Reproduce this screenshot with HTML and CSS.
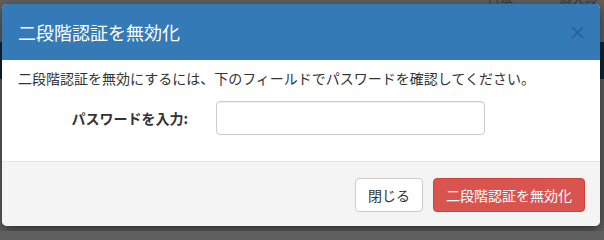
FILE: index.html
```html
<!DOCTYPE html>
<html lang="ja">
<head>
<meta charset="utf-8">
<title>二段階認証を無効化</title>
<link rel="stylesheet" href="styles.css">
</head>
<body>
<div class="page">
  <div class="page-nav">
    <span class="nav-item">日本語</span>
    <span class="nav-item">個人設定</span>
  </div>
  <div class="nav-band"></div>
</div>
<div class="modal">
  <div class="modal-header">
    <h4 class="modal-title">二段階認証を無効化</h4>
    <span class="close" aria-label="閉じる">
      <svg width="13" height="13" viewBox="0 0 13 13"><path d="M1 1 L12 12 M12 1 L1 12" stroke="#2b6597" stroke-width="2" fill="none"/></svg>
    </span>
  </div>
  <div class="modal-body">
    <p class="intro">二段階認証を無効にするには、下のフィールドでパスワードを確認してください。</p>
    <div class="form-row">
      <label class="form-label" for="pw">パスワードを入力:</label>
      <input class="form-input" id="pw" type="password">
    </div>
  </div>
  <div class="modal-footer">
    <button class="btn btn-default">閉じる</button>
    <button class="btn btn-danger">二段階認証を無効化</button>
  </div>
</div>
</body>
</html>
```
FILE: styles.css
```css
html, body {
  margin: 0;
  padding: 0;
}
body {
  background: #5f5f5f;
  font-family: "Noto Sans CJK JP", "Noto Sans", sans-serif;
  width: 604px;
  height: 231px;
  overflow: hidden;
  position: relative;
}
.page-nav {
  height: 42px;
  display: flex;
  padding-left: 487px;
  gap: 38px;
}
.nav-item {
  font-size: 13px;
  line-height: 14px;
  margin-top: -8px;
  color: #3a3a3a;
}
.nav-band {
  height: 37px;
  background: #0f2434;
}
.modal {
  position: absolute;
  left: 2px;
  top: 4px;
  width: 598px;
  background: #fff;
  border-radius: 5px;
  box-shadow: 0 4px 12px rgba(0, 0, 0, 0.5);
  overflow: hidden;
  color: #333;
}
.modal-header {
  background: #337ab7;
  color: #fff;
  padding: 15px 16px 15px 16px;
  display: flex;
  justify-content: space-between;
  align-items: center;
}
.modal-title {
  margin: 0;
  font-size: 18px;
  line-height: 26px;
  font-weight: normal;
}
.close {
  display: flex;
}
.modal-body {
  padding: 8px 15px 12px 16px;
}
.intro {
  margin: 0 0 13px;
  font-size: 14px;
  line-height: 20px;
}
.form-row {
  display: flex;
  align-items: center;
  margin-bottom: 14px;
}
.form-label {
  width: 170px;
  text-align: right;
  font-weight: bold;
  font-size: 14px;
  line-height: 20px;
  color: #333;
}
.form-input {
  margin-left: 28px;
  width: 269px;
  height: 34px;
  box-sizing: border-box;
  border: 1px solid #ccc;
  border-radius: 4px;
  box-shadow: inset 0 1px 1px rgba(0, 0, 0, 0.075);
  background: #fff;
  padding: 6px 12px;
  font-size: 14px;
}
.modal-footer {
  background: #f4f4f4;
  border-top: 1px solid #e5e5e5;
  padding: 16px 15px 14px;
  display: flex;
  justify-content: flex-end;
  gap: 10px;
}
.btn {
  font-family: "Noto Sans CJK JP", "Noto Sans", sans-serif;
  font-size: 14px;
  line-height: 20px;
  height: 34px;
  padding: 6px 12px;
  border-radius: 4px;
  border: 1px solid transparent;
  box-sizing: border-box;
}
.btn-default {
  background: #fff;
  border-color: #ccc;
  color: #333;
}
.btn-danger {
  background: #d9534f;
  border-color: #d43f3a;
  color: #fff;
}
```
